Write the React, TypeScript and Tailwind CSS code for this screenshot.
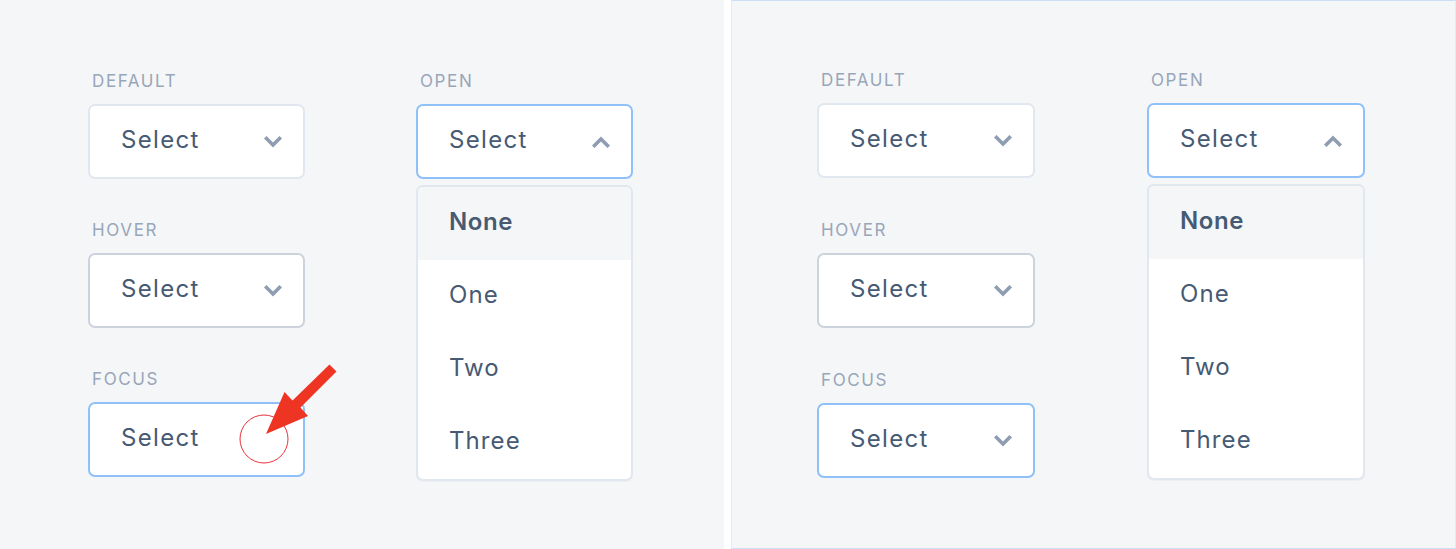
import React from 'react';

type BoxState = 'default' | 'hover' | 'focus' | 'open';

const borderByState: Record<BoxState, string> = {
  default: 'border-[#e1e7ee]',
  hover: 'border-[#ccd3dc]',
  focus: 'border-[#8fc1f8]',
  open: 'border-[#8fc1f8]',
};

const Chevron: React.FC<{ up?: boolean }> = ({ up }) => (
  <svg width="18" height="12" viewBox="0 0 18 12" className="shrink-0">
    <polyline
      points={up ? '2.5,9.5 9,3 15.5,9.5' : '2.5,2.5 9,9 15.5,2.5'}
      fill="none"
      stroke="#8e9db1"
      strokeWidth="3.6"
      strokeLinecap="square"
      strokeLinejoin="miter"
    />
  </svg>
);

const SelectBox: React.FC<{ state: BoxState; chevron?: boolean }> = ({ state, chevron = true }) => (
  <div
    className={`mt-[11px] h-[75px] rounded-[7px] border-2 bg-white flex items-center justify-between pl-[31px] pr-[21px] ${borderByState[state]}`}
  >
    <span className="pb-[4px] text-[24px] tracking-[0.055em] text-[#475a73]">Select</span>
    {chevron && <Chevron up={state === 'open'} />}
  </div>
);

const Label: React.FC<{ text: string }> = ({ text }) => (
  <span className="block h-6 pl-[4px] text-[17px] leading-6 uppercase tracking-[0.095em] text-[#98a6b9]">{text}</span>
);

const Field: React.FC<{ label: string; state: BoxState; chevron?: boolean }> = ({ label, state, chevron }) => (
  <div className="flex flex-col">
    <Label text={label} />
    <SelectBox state={state} chevron={chevron} />
  </div>
);

const options = ['None', 'One', 'Two', 'Three'];

const Menu: React.FC = () => (
  <div className="mt-[6px] rounded-[7px] border-2 border-[#e1e7ee] bg-white overflow-hidden shadow-[0_1px_1px_rgba(0,0,0,0.03)]">
    {options.map((opt, i) => (
      <div
        key={opt}
        className={`h-[73px] flex items-center pl-[31px] pb-[3px] text-[24px] text-[#475a73] ${
          i === 0 ? 'bg-[#f5f6f8] font-semibold tracking-[0.025em]' : 'tracking-[0.045em]'
        }`}
      >
        {opt}
      </div>
    ))}
  </div>
);

const Board: React.FC<{ fixed?: boolean }> = ({ fixed = false }) => (
  <div className={`flex ${fixed ? 'pl-[85px] pt-[67px] gap-x-[112px]' : 'pl-[88px] pt-[69px] gap-x-[111px]'}`}>
    <div className={`flex flex-col ${fixed ? 'w-[218px] gap-y-[40px]' : 'w-[217px] gap-y-[39px]'}`}>
      <Field label="Default" state="default" />
      <Field label="Hover" state="hover" />
      <Field label="Focus" state="focus" chevron={fixed} />
    </div>
    <div className={`flex flex-col ${fixed ? 'w-[218px]' : 'w-[217px]'}`}>
      <Label text="Open" />
      <SelectBox state="open" />
      <Menu />
    </div>
  </div>
);

const Annotation: React.FC = () => (
  <svg className="absolute left-0 top-0 pointer-events-none" width="724" height="549">
    <circle cx="264" cy="439" r="24" fill="none" stroke="#e8323a" strokeWidth="1" />
    <polygon
      points="329.5,364.4 336.5,371.6 300.5,407.6 308,416 266,434 284.5,392 292.5,400.4"
      fill="#ee3524"
    />
  </svg>
);

const App: React.FC = () => {
  return (
    <div className="flex w-[1456px] h-[549px] bg-white font-['Inter','Liberation_Sans',sans-serif]">
      <div className="relative w-[724px] h-full bg-[#f5f6f8]">
        <Board />
        <Annotation />
      </div>
      <div className="ml-[7px] w-[725px] h-full bg-[#f5f6f8] border-y border-y-[#cddff6] border-x border-x-[#e4ebf5]">
        <Board fixed />
      </div>
    </div>
  );
};

export default App;
